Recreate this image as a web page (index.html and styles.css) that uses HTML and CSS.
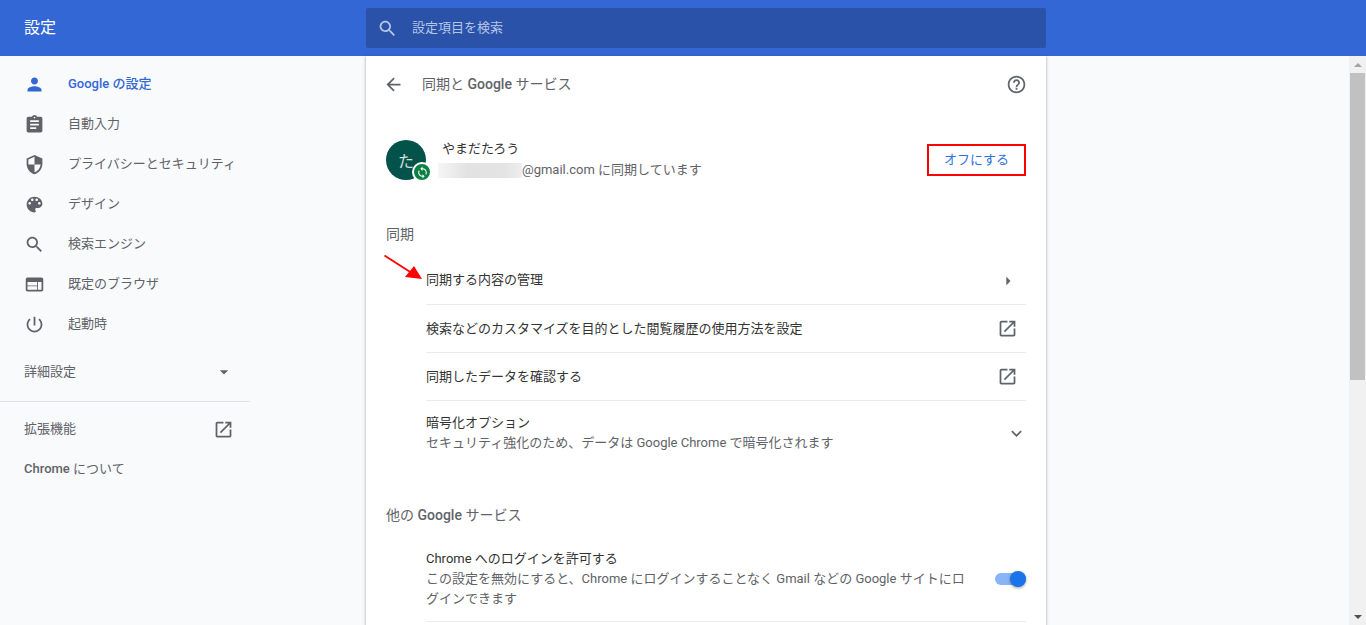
FILE: index.html
```html
<!DOCTYPE html>
<html lang="ja">

<head>
  <meta charset="UTF-8" />
  <title>設定</title>
  <link rel="stylesheet" href="styles.css">
</head>

<body>
  <svg class="defs" width="0" height="0">
    <symbol id="open" viewBox="0 0 24 24"><path d="M19 19H5V5h7V3H5c-1.11 0-2 .9-2 2v14c0 1.1.89 2 2 2h14c1.1 0 2-.9 2-2v-7h-2v7zM14 3v2h3.59l-9.83 9.83 1.41 1.41L19 6.41V10h2V3h-7z" /></symbol>
    <symbol id="search" viewBox="0 0 24 24"><path d="M15.5 14h-.79l-.28-.27C15.41 12.59 16 11.11 16 9.5 16 5.91 13.09 3 9.5 3S3 5.91 3 9.5 5.91 16 9.5 16c1.61 0 3.09-.59 4.23-1.57l.27.28v.79l5 4.99L20.49 19l-4.99-5zm-6 0C7.01 14 5 11.99 5 9.5S7.01 5 9.5 5 14 7.01 14 9.5 11.99 14 9.5 14z" /></symbol>
  </svg>

  <header class="topbar">
    <div class="topbar-title">設定</div>
    <div class="searchbox">
      <svg class="icon search-icon"><use href="#search" /></svg>
      <span class="label">設定項目を検索</span>
    </div>
  </header>

  <div class="page">
    <nav class="sidebar">
      <a class="nav-item active">
        <svg class="icon" viewBox="0 0 24 24"><path d="M12 12c2.21 0 4-1.79 4-4s-1.79-4-4-4-4 1.79-4 4 1.79 4 4 4zm0 2c-2.67 0-8 1.34-8 4v2h16v-2c0-2.66-5.33-4-8-4z" /></svg>
        <span class="label">Google の設定</span>
      </a>
      <a class="nav-item">
        <svg class="icon" viewBox="0 0 24 24"><path d="M19 3h-4.18C14.4 1.84 13.3 1 12 1c-1.3 0-2.4.84-2.82 2H5c-1.1 0-2 .9-2 2v14c0 1.1.9 2 2 2h14c1.1 0 2-.9 2-2V5c0-1.1-.9-2-2-2zm-7 0c.55 0 1 .45 1 1s-.45 1-1 1-1-.45-1-1 .45-1 1-1zm2 14H7v-2h7v2zm3-4H7v-2h10v2zm0-4H7V7h10v2z" /></svg>
        <span class="label">自動入力</span>
      </a>
      <a class="nav-item">
        <svg class="icon" viewBox="0 0 24 24"><path d="M12 1L3 5v6c0 5.55 3.84 10.74 9 12 5.16-1.26 9-6.45 9-12V5l-9-4zm0 10.99h7c-.53 4.12-3.28 7.79-7 8.94V12H5V6.3l7-3.11v8.8z" /></svg>
        <span class="label">プライバシーとセキュリティ</span>
      </a>
      <a class="nav-item">
        <svg class="icon" viewBox="0 0 24 24"><path d="M12 3c-4.97 0-9 4.03-9 9s4.03 9 9 9c.83 0 1.5-.67 1.5-1.5 0-.39-.15-.74-.39-1.01-.23-.26-.38-.61-.38-.99 0-.83.67-1.5 1.5-1.5H16c2.76 0 5-2.24 5-5 0-4.42-4.03-8-9-8zm-5.5 9c-.83 0-1.5-.67-1.5-1.5S5.67 9 6.5 9 8 9.67 8 10.5 7.33 12 6.5 12zm3-4C8.67 8 8 7.33 8 6.5S8.67 5 9.5 5s1.5.67 1.5 1.5S10.33 8 9.5 8zm5 0c-.83 0-1.5-.67-1.5-1.5S13.67 5 14.5 5s1.5.67 1.5 1.5S15.33 8 14.5 8zm3 4c-.83 0-1.5-.67-1.5-1.5S16.67 9 17.5 9s1.5.67 1.5 1.5-.67 1.5-1.5 1.5z" /></svg>
        <span class="label">デザイン</span>
      </a>
      <a class="nav-item">
        <svg class="icon"><use href="#search" /></svg>
        <span class="label">検索エンジン</span>
      </a>
      <a class="nav-item">
        <svg class="icon" viewBox="0 0 24 24"><path d="M20 4H4c-1.1 0-2 .9-2 2v12c0 1.1.9 2 2 2h16c1.100 0 2-.9 2-2V6c0-1.100-.9-2-2-2zm-5 14H4v-4h11v4zm0-5H4V9h11v4zm5 5h-4V9h4v9z" /></svg>
        <span class="label">既定のブラウザ</span>
      </a>
      <a class="nav-item">
        <svg class="icon" viewBox="0 0 24 24"><path d="M13 3h-2v10h2V3zm4.830 2.170l-1.420 1.420C17.990 7.860 19 9.810 19 12c0 3.870-3.130 7-7 7s-7-3.130-7-7c0-2.190 1.010-4.140 2.580-5.420L6.170 5.170C4.230 6.820 3 9.260 3 12c0 4.970 4.030 9 9 9s9-4.030 9-9c0-2.740-1.230-5.180-3.170-6.830z" /></svg>
        <span class="label">起動時</span>
      </a>
      <div class="nav-advanced">
        <span class="label">詳細設定</span>
        <svg class="icon small" viewBox="0 0 24 24"><path d="M7 10l5 5 5-5z" /></svg>
      </div>
      <div class="nav-divider"></div>
      <a class="nav-plain">
        <span class="label">拡張機能</span>
        <svg class="icon"><use href="#open" /></svg>
      </a>
      <a class="nav-plain"><span class="label"><span class="latin">Chrome</span> について</span></a>
    </nav>

    <main class="card">
      <div class="card-head">
        <svg class="icon" viewBox="0 0 24 24"><path d="M20 11H7.830l5.590-5.590L12 4l-8 8 8 8 1.410-1.410L7.830 13H20v-2z" /></svg>
        <h1>同期と <span class="latin">Google</span> サービス</h1>
        <svg class="icon help" viewBox="0 0 24 24"><path d="M11 18h2v-2h-2v2zm1-16C6.480 2 2 6.480 2 12s4.480 10 10 10 10-4.480 10-10S17.520 2 12 2zm0 18c-4.410 0-8-3.590-8-8s3.590-8 8-8 8 3.590 8 8-3.590 8-8 8zm0-14c-2.210 0-4 1.790-4 4h2c0-1.100.9-2 2-2s2 .9 2 2c0 2-3 1.750-3 5h2c0-2.250 3-2.500 3-5 0-2.210-1.790-4-4-4z" /></svg>
      </div>

      <div class="profile">
        <div class="avatar">
          た
          <span class="sync-badge">
            <svg viewBox="0 0 24 24"><path d="M12 4V1L8 5l4 4V6c3.310 0 6 2.690 6 6 0 1.010-.25 1.970-.7 2.800l1.460 1.460C19.540 15.030 20 13.570 20 12c0-4.420-3.580-8-8-8zm0 14c-3.310 0-6-2.690-6-6 0-1.010.25-1.970.7-2.800L5.240 7.740C4.460 8.970 4 10.430 4 12c0 4.420 3.580 8 8 8v3l4-4-4-4v3z" /></svg>
          </span>
        </div>
        <div class="profile-text">
          <div class="profile-name">やまだたろう</div>
          <div class="profile-mail"><span class="blurred"></span>@gmail.com に同期しています</div>
        </div>
        <button class="off-button">オフにする</button>
      </div>

      <h2 class="section-title first">同期</h2>
      <div class="list">
        <div class="row">
          <span class="label">同期する内容の管理</span>
          <svg class="icon tiny" viewBox="0 0 24 24"><path d="M10 17l5-5-5-5v10z" /></svg>
        </div>
        <div class="row">
          <span class="label-row">検索などのカスタマイズを目的とした閲覧履歴の使用方法を設定</span>
          <svg class="icon"><use href="#open" /></svg>
        </div>
        <div class="row">
          <span class="label-row">同期したデータを確認する</span>
          <svg class="icon"><use href="#open" /></svg>
        </div>
        <div class="row tall">
          <div class="tall-text">
            <div class="row-main">暗号化オプション</div>
            <div class="row-sub">セキュリティ強化のため、データは Google Chrome で暗号化されます</div>
          </div>
          <svg class="icon chevron" viewBox="0 0 24 24"><path d="M16.590 8.590L12 13.170 7.410 8.590 6 10l6 6 6-6z" /></svg>
        </div>
      </div>

      <h2 class="section-title second">他の <span class="latin">Google</span> サービス</h2>
      <div class="list">
        <div class="row login">
          <div class="login-text">
            <div class="row-main">Chrome へのログインを許可する</div>
            <div class="row-sub">この設定を無効にすると、Chrome にログインすることなく Gmail などの Google サイトにログインできます</div>
          </div>
          <div class="toggle"><span class="toggle-knob"></span></div>
        </div>
      </div>

      <svg class="red-arrow" width="40" height="26" viewBox="0 0 40 26">
        <path d="M0.500 0.500L27 17.500" stroke="#f00" stroke-width="1.800" fill="none" />
        <path d="M38 24L21 22L30 11z" fill="#f00" />
      </svg>
    </main>

    <div class="scrollbar">
      <span class="scroll-up"></span>
      <span class="scroll-thumb"></span>
      <span class="scroll-down"></span>
    </div>
  </div>
</body>

</html>
```

FILE: styles.css
```css
* {
  box-sizing: border-box;
}

html,
body {
  height: 100%;
}

body {
  margin: 0;
  display: flex;
  flex-direction: column;
  overflow: hidden;
  background-color: #f9fafc;
  color: #5f6368;
  font-family: Roboto, "Noto Sans CJK JP", sans-serif;
  font-size: 13px;
}

.defs {
  position: absolute;
}

.icon {
  width: 21px;
  height: 21px;
  flex-shrink: 0;
  fill: #5f6368;
}

/* Noto sits lower in its line box than the original font */
.label {
  margin-bottom: 4px;
}

.latin {
  font-weight: 500;
}

/* Top bar */
.topbar {
  height: 56px;
  flex-shrink: 0;
  display: flex;
  align-items: center;
  background-color: #3367d6;
}

.topbar-title {
  width: 366px;
  margin-bottom: 4px;
  padding-left: 24px;
  color: #fff;
  font-size: 16px;
}

.searchbox {
  width: 680px;
  height: 40px;
  display: flex;
  align-items: center;
  gap: 14px;
  padding-left: 11px;
  border-radius: 2px;
  background-color: #2a52a9;
  color: #b4c5e8;
}

.search-icon {
  fill: #b4c5e8;
}

/* Layout below the bar */
.page {
  flex: 1;
  min-height: 0;
  display: flex;
}

/* Left navigation */
.sidebar {
  width: 366px;
  flex-shrink: 0;
  padding-top: 8px;
}

.nav-item {
  height: 40px;
  display: flex;
  align-items: center;
  gap: 23px;
  padding-left: 24px;
}

.nav-item.active {
  color: #3367d6;
  font-weight: 500;
}

.nav-item.active .icon {
  fill: #3367d6;
}

.nav-advanced {
  width: 250px;
  height: 40px;
  margin-top: 8px;
  display: flex;
  align-items: center;
  justify-content: space-between;
  padding: 0 16px 0 24px;
}

.small {
  width: 20px;
  height: 20px;
}

.nav-divider {
  width: 250px;
  margin-top: 9px;
  border-top: 1px solid #e0e2e6;
}

.nav-plain {
  width: 250px;
  height: 40px;
  display: flex;
  align-items: center;
  justify-content: space-between;
  padding: 0 16px 0 24px;
}

.nav-divider + .nav-plain {
  margin-top: 7px;
}

/* Main card */
.card {
  position: relative;
  width: 680px;
  flex-shrink: 0;
  padding: 0 20px;
  background-color: #fff;
  box-shadow: 0 1px 2px rgba(60, 64, 67, 0.3), 0 1px 3px 1px rgba(60, 64, 67, 0.15);
}

.card-head {
  height: 56px;
  display: flex;
  align-items: center;
  gap: 18px;
}

.card-head .icon {
  margin-left: -3px;
}

.card-head h1 {
  flex: 1;
  margin: 0 0 2px;
  font-size: 14px;
  font-weight: 400;
}

.card-head .help {
  margin: 0 -1px 0 0;
}

.profile {
  height: 40px;
  margin-top: 28px;
  display: flex;
  align-items: center;
}

.avatar {
  position: relative;
  width: 40px;
  height: 40px;
  flex-shrink: 0;
  display: flex;
  align-items: center;
  justify-content: center;
  border-radius: 50%;
  background-color: #04534a;
  color: #d3dedb;
  font-size: 16px;
}

.sync-badge {
  position: absolute;
  right: -6px;
  bottom: -2px;
  width: 20px;
  height: 20px;
  display: flex;
  align-items: center;
  justify-content: center;
  border: 2px solid #fff;
  border-radius: 50%;
  background-color: #0b8043;
}

.sync-badge svg {
  width: 13px;
  height: 13px;
  fill: #fff;
}

.profile-text {
  flex: 1;
  margin-left: 12px;
}

.profile-name {
  margin: -1px 0 1px 4px;
  color: #333;
  line-height: 20px;
}

.profile-mail {
  display: flex;
  align-items: center;
  line-height: 20px;
  white-space: pre;
}

.blurred {
  width: 84px;
  height: 15px;
  background: linear-gradient(90deg, #f6f6f6, #e2e2e2 35%, #e4e4e4 80%, #eee);
}

.off-button {
  width: 99px;
  height: 32px;
  padding: 0 0 4px;
  border: 2px solid #f00;
  background-color: #fff;
  color: #2f6fe0;
  font-family: inherit;
  font-size: 13px;
}

.section-title {
  margin: 0;
  font-size: 14px;
  font-weight: 400;
  line-height: 20px;
}

.section-title.first {
  margin-top: 44px;
}

.section-title.second {
  margin-top: 39px;
}

.list {
  margin-left: 40px;
}

.section-title + .list {
  margin-top: 13px;
}

.section-title.second + .list {
  margin-top: 12px;
}

.row {
  min-height: 48px;
  display: flex;
  align-items: center;
  justify-content: space-between;
  border-bottom: 1px solid #e8eaed;
  color: #333;
}

.row .icon {
  margin-right: 8px;
}

.label-row {
  margin-bottom: 2px;
}

.row:nth-child(4) {
  border-bottom: 0;
}

.tall {
  height: 65px;
}

.tall-text {
  margin-bottom: 2px;
}

.row-main {
  line-height: 20px;
  color: #333;
}

.row-sub {
  line-height: 20px;
  color: #5f6368;
}

.row .tiny {
  width: 20px;
  height: 20px;
  margin-right: 8px;
}

.row .chevron {
  margin-right: -1px;
}

.login {
  height: 85px;
}

.login-text {
  width: 545px;
}

/* Toggle switch */
.toggle {
  position: relative;
  width: 31px;
  height: 12px;
  border-radius: 6px;
  background-color: #8ab4f8;
}

.toggle-knob {
  position: absolute;
  right: 0;
  top: -2px;
  width: 16px;
  height: 16px;
  border-radius: 50%;
  background-color: #1a73e8;
  box-shadow: 0 1px 3px rgba(0, 0, 0, 0.4);
}

/* Annotation drawn over the page */
.red-arrow {
  position: absolute;
  left: 18px;
  top: 199px;
}

/* Fake scrollbar */
.scrollbar {
  flex: 1;
  display: flex;
  flex-direction: column;
  align-items: flex-end;
}

.scroll-up,
.scroll-down {
  width: 17px;
  height: 17px;
  display: flex;
  align-items: center;
  justify-content: center;
  background-color: #f1f1f1;
}

.scroll-up::before {
  content: "";
  border: 4px solid transparent;
  border-top: 0;
  border-bottom: 4px solid #a3a3a3;
}

.scroll-down::before {
  content: "";
  border: 4px solid transparent;
  border-bottom: 0;
  border-top: 4px solid #505050;
}

.scroll-thumb {
  width: 17px;
  height: 307px;
  border: solid #f1f1f1;
  border-width: 0 1px;
  background-color: #c1c1c1;
}

.scroll-down {
  flex: 1;
  align-items: flex-end;
  padding-bottom: 6px;
}
```
